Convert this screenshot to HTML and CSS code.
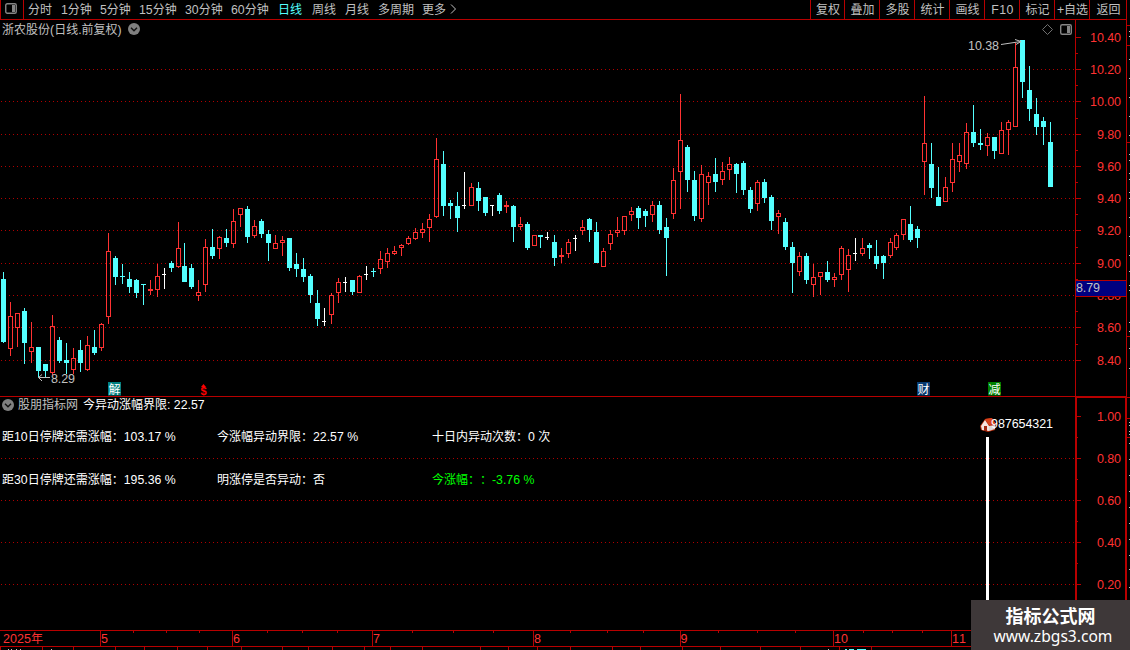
FILE: index.html
```html
<!DOCTYPE html>
<html lang="zh-CN">
<head>
<meta charset="utf-8">
<title>浙农股份 日线</title>
<link rel="stylesheet" href="styles.css">
</head>
<body>
<div class="app">
  <header class="toolbar">
    <div class="panel-toggle">
      <svg width="12" height="11" viewBox="0 0 12 11"><rect x=".75" y=".75" width="10.5" height="9.5" rx="1.5" fill="none" stroke="#858585" stroke-width="1.4"/><rect x="7" y="2" width="3" height="7" fill="#858585"/></svg>
    </div>
    <nav class="periods">
      <span class="w33">分时</span><span class="w39"><i>1</i>分钟</span><span class="w39"><i>5</i>分钟</span><span class="w46"><i>15</i>分钟</span><span class="w46"><i>30</i>分钟</span><span class="w47"><i>60</i>分钟</span><span class="w34 active">日线</span><span class="w33">周线</span><span class="w33">月线</span><span class="w44">多周期</span><span class="w28">更多</span>
      <svg width="7" height="10" viewBox="0 0 7 10"><path d="M1 .5L5.5 5L1 9.5" fill="none" stroke="#c0c0c0"/></svg>
    </nav>
    <div class="tools">
      <span class="tool first">复权</span><span class="tool">叠加</span><span class="tool">多股</span><span class="tool">统计</span><span class="tool">画线</span><span class="tool"><i class="wide">F10</i></span><span class="tool">标记</span><span class="tool"><i>+</i>自选</span><span class="tool last">返回</span>
    </div>
  </header>

  <section class="pane price">
    <svg class="plot" id="price" width="1130" height="377" viewBox="0 20 1130 377"></svg>
    <div class="caption stock">
      <span>浙农股份<i>(</i>日线<i>.</i>前复权<i>)</i></span>
      <svg width="12" height="12" viewBox="0 0 12 12"><circle cx="6" cy="6" r="6" fill="#808080"/><path d="M3 4.7L6 7.7L9 4.7" fill="none" stroke="#111" stroke-width="1.4"/></svg>
    </div>
  </section>

  <section class="pane indicator">
    <svg class="plot" id="indicator" width="1130" height="233" viewBox="0 397 1130 233"></svg>
    <div class="caption formula">
      <svg width="12" height="12" viewBox="0 0 12 12"><circle cx="6" cy="6" r="6" fill="#808080"/><path d="M3 4.7L6 7.7L9 4.7" fill="none" stroke="#111" stroke-width="1.4"/></svg>
      <span class="source">股朋指标网</span>
      <span class="value">今异动涨幅界限<i>: 22.57</i></span>
    </div>
    <div class="info">
      <span>距<i>10</i>日停牌还需涨幅：<i>103.17 %</i></span>
      <span>今涨幅异动界限：<i>22.57 %</i></span>
      <span>十日内异动次数：<i>0 </i>次</span>
      <span>距<i>30</i>日停牌还需涨幅：<i>195.36 %</i></span>
      <span>明涨停是否异动：否</span>
      <span class="down">今涨幅：：<i>-3.76 %</i></span>
    </div>
  </section>

  <footer class="timeline">
    <svg id="timeline" width="1130" height="20" viewBox="0 630 1130 20"></svg>
  </footer>

  <aside class="watermark">
    <strong>指标公式网</strong>
    <span>www.zbgs3.com</span>
  </aside>
</div>
<script src="chart.js"></script>
</body>
</html>
```
FILE: styles.css
```css
* { box-sizing: border-box; }
body {
  margin: 0;
  background: #000;
  color: #c0c0c0;
  font-family: "Noto Sans CJK SC", sans-serif;
  font-size: 12px;
  line-height: 14px;
  text-spacing-trim: space-all;
  overflow: hidden;
}
i {
  font-family: "Liberation Sans", Arial, sans-serif;
  font-style: normal;
  font-size: 12.3px;
  line-height: 1;
}
svg { display: block; }
.app {
  position: relative;
  width: 1130px;
  height: 650px;
  display: grid;
  grid-template-rows: 20px 377px 233px 20px;
}
.toolbar {
  display: flex;
  width: 1127px;
  border-bottom: 1px solid #b80000;
  border-right: 1px solid #b80000;
  white-space: nowrap;
}
.panel-toggle {
  width: 24px;
  padding: 3px 0 0 4px;
  border-left: 1px solid #b80000;
  border-right: 1px solid #b80000;
}
.periods {
  display: flex;
  flex: 1;
  padding-left: 4px;
  line-height: 18px;
}
.periods svg { margin-top: 4px; }
.w28 { width: 28px; }
.w33 { width: 33px; }
.w34 { width: 34px; }
.w39 { width: 39px; }
.w44 { width: 44px; }
.w46 { width: 46px; }
.w47 { width: 47px; }
.active { color: #54ffff; }
.tools { display: flex; }
.tool {
  width: 35px;
  border-left: 1px solid #b80000;
  padding-left: 1px;
  text-align: center;
  line-height: 18px;
}
.tool.first { width: 34px; }
.tool.last { width: 37px; }
.wide { letter-spacing: .4px; }

.pane { position: relative; }
.caption {
  position: absolute;
  left: 2px;
  display: flex;
  align-items: center;
}
.stock { top: 2px; gap: 6px; }
.formula { top: 1px; gap: 4px; }
.formula span { line-height: 14px; margin-top: -1px; }
.formula .value { margin-left: 1px; }
.value, .info { color: #fff; }
.info {
  position: absolute;
  top: 32px;
  left: 2px;
  display: grid;
  grid-template-columns: 215px 215px 215px;
  grid-auto-rows: 14px;
  row-gap: 29px;
  white-space: nowrap;
  font-feature-settings: "chws" 0;
}
.info .down { color: #00ff00; }

.num {
  font-family: "Liberation Sans", Arial, sans-serif;
  font-size: 12.5px;
}
.tick-label { fill: #ff3232; }
.note { fill: #c0c0c0; }
.axis { fill: #b80000; }
.grid { stroke: #b00000; stroke-dasharray: 1 3; }
.white { fill: #fff; }
.badge { font-size: 12px; fill: #fff; }
.year { font-size: 12px; }

.watermark {
  position: absolute;
  right: 0;
  bottom: 0;
  width: 159px;
  height: 50px;
  padding-top: 4px;
  background: #3e3839;
  color: #fff;
  display: flex;
  flex-direction: column;
  align-items: center;
}
.watermark strong { font-size: 18px; line-height: 22px; }
.watermark span {
  font-family: "Noto Sans", sans-serif;
  font-size: 15.6px;
  line-height: 20px;
  margin-left: 5px;
}
```
FILE: chart.js
```js
// Each candle: centre x, high, body top, body bottom, low, kind (r = up, c = down, w = flat)
const candles = `3 272 279 342 343 c;10 302 316 349 356 r;17 313 313 328 347 r;24 308 311 343 364 c;31 322 347 352 363 r
38 347 347 371 377 c;45 364 364 371 377 c;52 315 326 373 375 r;59 337 340 361 363 c;66 343 360 363 374 c
73 348 358 370 374 r;80 340 350 363 372 c;87 336 345 370 371 r;94 330 347 353 355 c;101 323 324 348 351 r
108 233 251 317 324 r;115 256 258 277 285 c;122 264 276 277 284 c;129 272 279 287 293 c;136 279 280 293 298 c
143 284 284 285 305 c;150 280 289 291 295 r;157 264 276 290 297 r;164 268 274 275 289 w;171 261 263 268 272 c
178 222 248 267 268 r;184 243 266 282 282 c;191 264 268 287 289 c;198 280 292 296 301 r;205 239 247 285 292 r
212 229 247 256 259 c;219 236 237 249 259 r;226 229 238 243 247 c;233 209 221 244 248 r;240 208 208 215 227 r
247 206 209 237 243 c;254 220 226 236 238 r;261 219 221 234 238 c;268 230 234 243 261 c;275 235 243 249 249 r
282 236 240 243 256 r;289 238 238 268 271 c;296 253 264 269 277 c;303 258 269 277 282 c;310 274 276 295 303 c
317 290 303 319 326 c;324 308 321 322 326 w;331 293 295 315 324 r;338 278 282 293 303 r;345 277 282 283 292 w
352 280 280 292 295 c;359 275 276 293 293 r;366 266 274 275 280 w;373 268 271 272 277 c;380 251 259 269 274 r
387 248 253 262 268 r;394 246 251 254 255 r;401 244 245 248 256 r;408 236 238 244 245 r;415 228 232 239 240 r
422 223 229 233 238 r;429 214 219 228 242 r;436 138 159 217 218 r;443 151 164 206 216 c;450 200 203 206 219 c
457 192 206 218 232 c;464 172 205 206 209 w;471 183 187 206 206 r;478 182 188 201 211 c;485 197 197 213 216 c
492 205 205 206 216 w;499 193 195 211 214 c;506 201 205 207 213 r;513 205 206 227 242 c;520 217 224 227 230 r
527 222 224 248 250 c;534 235 235 246 246 r;540 235 235 237 248 c;547 232 237 238 240 w;554 235 242 258 266 c
561 248 255 257 263 r;568 239 242 254 258 r;575 235 238 239 251 w;582 220 227 231 235 r;589 218 219 230 242 c
596 222 232 263 263 c;603 248 251 267 267 r;610 230 234 244 250 r;617 217 230 233 237 r;624 216 216 231 235 r
631 207 211 215 221 r;638 206 208 218 229 c;645 209 211 216 227 c;652 201 205 215 222 r;659 201 205 230 234 c
666 218 227 238 276 c;673 168 180 214 219 r;680 94 140 172 209 r;687 145 147 180 192 c;694 171 180 216 221 c
701 165 174 219 222 r;708 172 176 183 205 r;715 158 174 182 192 c;722 162 171 180 185 r;729 157 164 170 180 r
736 163 164 174 193 c;743 161 163 190 195 c;750 187 190 209 213 c;757 180 182 204 211 r;764 179 182 198 203 c
771 195 197 221 230 c;778 210 213 217 234 r;785 218 222 247 250 c;792 242 247 263 293 c;799 252 256 272 276 r
806 253 256 280 284 c;813 264 277 285 297 r;820 272 272 277 295 r;827 261 272 280 282 c;834 273 277 280 287 r
841 246 248 275 280 r;848 249 255 270 292 r;855 238 253 254 261 w;862 238 248 254 256 r;869 243 245 248 259 c
876 240 256 264 269 c;883 255 256 263 279 c;890 238 242 256 258 r;896 233 235 248 250 r;903 219 219 235 240 r
910 206 224 240 242 c;917 226 229 238 248 c;924 96 143 162 195 r;931 143 164 188 198 c;938 167 197 206 206 c
945 177 187 202 202 r;952 143 159 183 192 r;959 143 155 162 172 r;966 123 132 164 169 r;973 105 132 143 147 c
980 129 143 145 150 c;987 133 137 146 156 r;994 137 137 151 159 c;1001 122 130 154 154 r;1008 120 122 130 155 r
1015 43 67 127 127 r;1022 40 40 82 98 c;1029 66 90 109 121 c;1036 98 114 127 135 c;1043 117 121 127 145 c
1050 122 142 187 187 c`.split(/[;\n]/).map(s => s.trim().split(' '));

const colors = { r: '#ff3232', c: '#54ffff', w: '#ffffff' };
const box = (x, y, w, h, extra = 'class="axis"') => `<rect x="${x}" y="${y}" width="${w}" height="${h}" ${extra}/>`;
const grid = y => `<line class="grid" x1="1" x2="1075" y1="${y + .5}" y2="${y + .5}"/>`;
const label = (text, x, y, len, cls = 'tick-label') =>
  `<text class="num ${cls}" x="${x}" y="${y}" textLength="${len}">${text}</text>`;

function candle([cx, hi, top, bot, lo, kind]) {
  [cx, hi, top, bot, lo] = [cx, hi, top, bot, lo].map(Number);
  const fill = `fill="${colors[kind]}"`;
  if (kind === 'r') {
    return box(cx, hi, 1, top - hi, fill) + box(cx, bot, 1, lo - bot, fill) +
      `<rect x="${cx - 1.5}" y="${top + .5}" width="4" height="${bot - top - 1}" fill="none" stroke="${colors.r}"/>`;
  }
  return box(cx, hi, 1, lo - hi, fill) + box(cx - 2, top, kind === 'w' ? 4 : 5, bot - top, fill);
}

// Price pane
const priceTicks = [[37, '10.40'], [69, '10.20'], [101, '10.00'], [134, '9.80'], [166, '9.60'], [198, '9.40'],
  [230, '9.20'], [263, '9.00'], [295, '8.80'], [327, '8.60'], [360, '8.40']];
let p = '<g shape-rendering="crispEdges">';
p += priceTicks.slice(1).map(t => grid(t[0])).join('');
p += candles.map(candle).join('');
p += box(1075, 20, 1, 377) + box(1126, 20, 1, 377) + box(0, 396, 1127, 1);
p += priceTicks.map(t => box(1076, t[0], 5, 1)).join('');
p += [53, 85, 118, 150, 182, 214, 247, 279, 311, 344].map(y => box(1076, y, 2, 1)).join('');
p += [25, 45, 142, 336].map(y => box(1127, y, 3, 1)).join('');
p += [31, 36, 59, 78, 97, 116, 135, 154, 160, 173, 179, 192, 198, 217, 236, 255, 271, 285, 290, 322, 331, 348, 368]
  .map(y => box(1129, y, 1, 1, 'fill="#c0c0c0"')).join('');
p += '</g>';
p += priceTicks.map(([y, t]) => t.length > 4 ? label(t, 1090, y + 5, 31) : label(t, 1097, y + 5, 24)).join('');
p += box(1076, 280, 50, 17) + box(1076, 281, 50, 15, 'fill="#000080"') + label('8.79', 1076, 292, 24, 'note');
p += label('8.29', 51, 383, 24, 'note') + label('10.38', 968, 50, 31, 'note');
p += '<path d="M38.5 377.5H50M42 374.5L38.5 377.5L42 381M1001 44.5L1021 41.5M1015 39.5L1021 41.5L1016 44.5" fill="none" stroke="#c0c0c0"/>';
p += '<path d="M1042.5 29.5L1047.5 24.5L1052.5 29.5L1047.5 34.5Z" fill="none" stroke="#707070"/>';
p += '<rect x="1060.7" y="24.7" width="10.6" height="9.6" rx="1.5" fill="none" stroke="#858585" stroke-width="1.4"/>' + box(1067, 26, 3, 7, 'fill="#858585"');
for (const [x, t, c] of [[108, '解', '#008080'], [917, '财', '#083a70'], [988, '减', '#008000']]) {
  p += box(x, 382, 13, 13.5, `fill="${c}"`) + `<text class="badge" x="${x + .5}" y="393.5">${t}</text>`;
}
p += '<path d="M203.5 384L206 387H201Z" fill="#f00"/><text x="200.5" y="395" class="num" font-weight="bold" fill="#f00" style="font-size:11px">$</text>';
document.getElementById('price').innerHTML = p;

// Indicator pane
const subTicks = [[416, '1.00'], [458, '0.80'], [500, '0.60'], [542, '0.40'], [584, '0.20']];
let q = '<g shape-rendering="crispEdges">';
q += subTicks.slice(1).map(t => grid(t[0])).join('');
q += box(1075, 397, 2, 233) + box(1125, 397, 2, 233) + box(1075, 397, 52, 1);
q += subTicks.map(t => box(1077, t[0], 4, 1)).join('');
q += [437, 479, 521, 563].map(y => box(1077, y, 1, 1)).join('');
q += [397, 418, 437].map(y => box(1127, y, 3, 1)).join('');
q += [422, 425, 431, 434, 443, 459, 475, 491, 507, 523, 539, 555, 569, 587].map(y => box(1129, y, 1, 1, 'fill="#c0c0c0"')).join('');
q += box(986, 437, 3, 193, 'class="white"') + '</g>';
q += subTicks.map(([y, t]) => label(t, 1097, y + 5, 24)).join('');
q += '<path d="M980 426L985 419L991 418L996 424L995 430L988 432L981 430Z" fill="#b82a08"/>' +
  '<path d="M985 419L992 418L996 424L989 425Z" fill="#d9431c"/>' +
  '<path d="M981 426L985 420L989 426V431L982 430Z" fill="#f4e4e0"/>' +
  '<path d="M989 426L995 425V429L989 431Z" fill="#ded8d8"/><path d="M984 426H987V431H984Z" fill="#a32812"/>';
q += label('987654321', 991, 428, 62, 'white');
document.getElementById('indicator').innerHTML = q;

// Time axis
let t = '<g shape-rendering="crispEdges">' + box(0, 630, 1127, 1) + box(0, 646, 1127, 1);
t += [100, 232, 372, 533, 680, 833, 951].map(x => box(x, 631, 1, 15)).join('');
t += [133, 166, 199, 267, 302, 337, 412, 453, 493, 570, 607, 643, 718, 757, 795, 863, 892, 922].map(x => box(x, 631, 1, 2)).join('');
t += [0, 42, 73, 115, 144, 177, 207, 241, 282, 308, 332, 364, 390, 422, 480, 508, 537, 570, 612, 640, 682, 720, 760, 800, 839, 871]
  .map(x => box(x, 647, 1, 3)).join('');
t += [8, 11, 16, 20, 51, 828].map(x => box(x, 649, 1, 1, 'fill="#c0c0c0"')).join('');
t += box(845, 649, 2, 1, 'fill="#54ffff"') + box(849, 649, 5, 1, 'fill="#54ffff"') + box(857, 649, 9, 1, 'fill="#54ffff"') + '</g>';
t += label('2025', 3, 643, 28) + '<text class="tick-label year" x="31" y="643">年</text>';
for (const [x, m] of [[101, 5], [233, 6], [373, 7], [534, 8], [680.5, 9]]) t += label(m, x, 643, 7);
t += label(10, 834, 643, 14) + label(11, 952, 643, 14);
document.getElementById('timeline').innerHTML = t;
```
